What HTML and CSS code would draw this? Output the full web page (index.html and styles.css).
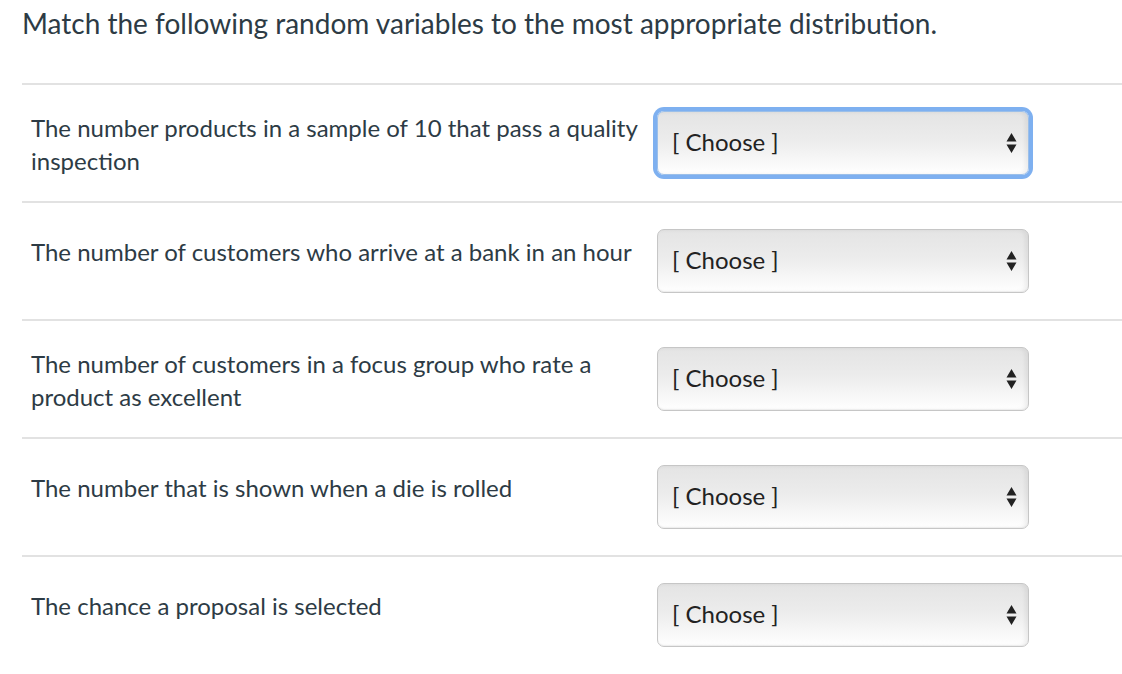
FILE: index.html
```html
<!DOCTYPE html>
<html>
<head>
<meta charset="utf-8">
<link rel="stylesheet" href="styles.css">
</head>
<body>
<div class="question">
  <div class="title">Match the following random variables to the most appropriate distribution.</div>
  <div class="rows">
    <div class="row">
      <div class="label two">The number products in a sample of 10 that pass a quality inspection</div>
      <div class="select focused"><span>[ Choose ]</span><svg class="arrows" width="11" height="22" viewBox="0 0 11 22"><path d="M5.5 1 L10.5 9.5 L0.5 9.5 Z M0.5 12.5 L10.5 12.5 L5.5 21 Z" fill="#222"/></svg></div>
    </div>
    <div class="row">
      <div class="label">The number of customers who arrive at a bank in an hour</div>
      <div class="select"><span>[ Choose ]</span><svg class="arrows" width="11" height="22" viewBox="0 0 11 22"><path d="M5.5 1 L10.5 9.5 L0.5 9.5 Z M0.5 12.5 L10.5 12.5 L5.5 21 Z" fill="#222"/></svg></div>
    </div>
    <div class="row">
      <div class="label two">The number of customers in a focus group who rate a product as excellent</div>
      <div class="select"><span>[ Choose ]</span><svg class="arrows" width="11" height="22" viewBox="0 0 11 22"><path d="M5.5 1 L10.5 9.5 L0.5 9.5 Z M0.5 12.5 L10.5 12.5 L5.5 21 Z" fill="#222"/></svg></div>
    </div>
    <div class="row">
      <div class="label">The number that is shown when a die is rolled</div>
      <div class="select"><span>[ Choose ]</span><svg class="arrows" width="11" height="22" viewBox="0 0 11 22"><path d="M5.5 1 L10.5 9.5 L0.5 9.5 Z M0.5 12.5 L10.5 12.5 L5.5 21 Z" fill="#222"/></svg></div>
    </div>
    <div class="row">
      <div class="label">The chance a proposal is selected</div>
      <div class="select"><span>[ Choose ]</span><svg class="arrows" width="11" height="22" viewBox="0 0 11 22"><path d="M5.5 1 L10.5 9.5 L0.5 9.5 Z M0.5 12.5 L10.5 12.5 L5.5 21 Z" fill="#222"/></svg></div>
    </div>
  </div>
</div>
</body>
</html>
```

FILE: styles.css
```css
html, body {
  margin: 0;
  padding: 0;
  background: #fff;
}
body {
  font-family: Lato, "Open Sans", sans-serif;
  color: #2d3b45;
  width: 1122px;
  height: 674px;
  overflow: hidden;
}
.question {
  padding-left: 22px;
}
.title {
  font-size: 28px;
  line-height: 36px;
  padding-top: 5px;
  height: 78px;
}
.row {
  display: flex;
  align-items: flex-start;
  border-top: 2px solid #e2e2e2;
  height: 116px;
}
.label {
  width: 610px;
  padding-left: 9px;
  padding-top: 32px;
  font-size: 24px;
  line-height: 33px;
  box-sizing: content-box;
}
.label.two {
  padding-top: 26px;
}
.select {
  margin-left: 16px;
  margin-top: 26px;
  width: 372px;
  height: 64px;
  box-sizing: border-box;
  border: 1px solid #c6c6c6;
  border-radius: 7px;
  background: linear-gradient(to bottom, #e4e4e4 0%, #ececec 45%, #f8f8f8 80%, #ffffff 100%);
  box-shadow: inset -3px 0 4px rgba(0,0,0,0.06), inset 0 -1px 1px rgba(0,0,0,0.05);
  display: flex;
  align-items: center;
  justify-content: space-between;
  padding: 0 11px 3px 14px;
  font-size: 24px;
  color: #222;
}
.select .arrows {
  margin-top: 3px;
}
.select.focused {
  box-shadow: 0 0 0 4px #7eb0f0, inset -3px 0 4px rgba(0,0,0,0.06);
  border-color: #9bbfe9;
}
.arrows {
  display: block;
}
```
